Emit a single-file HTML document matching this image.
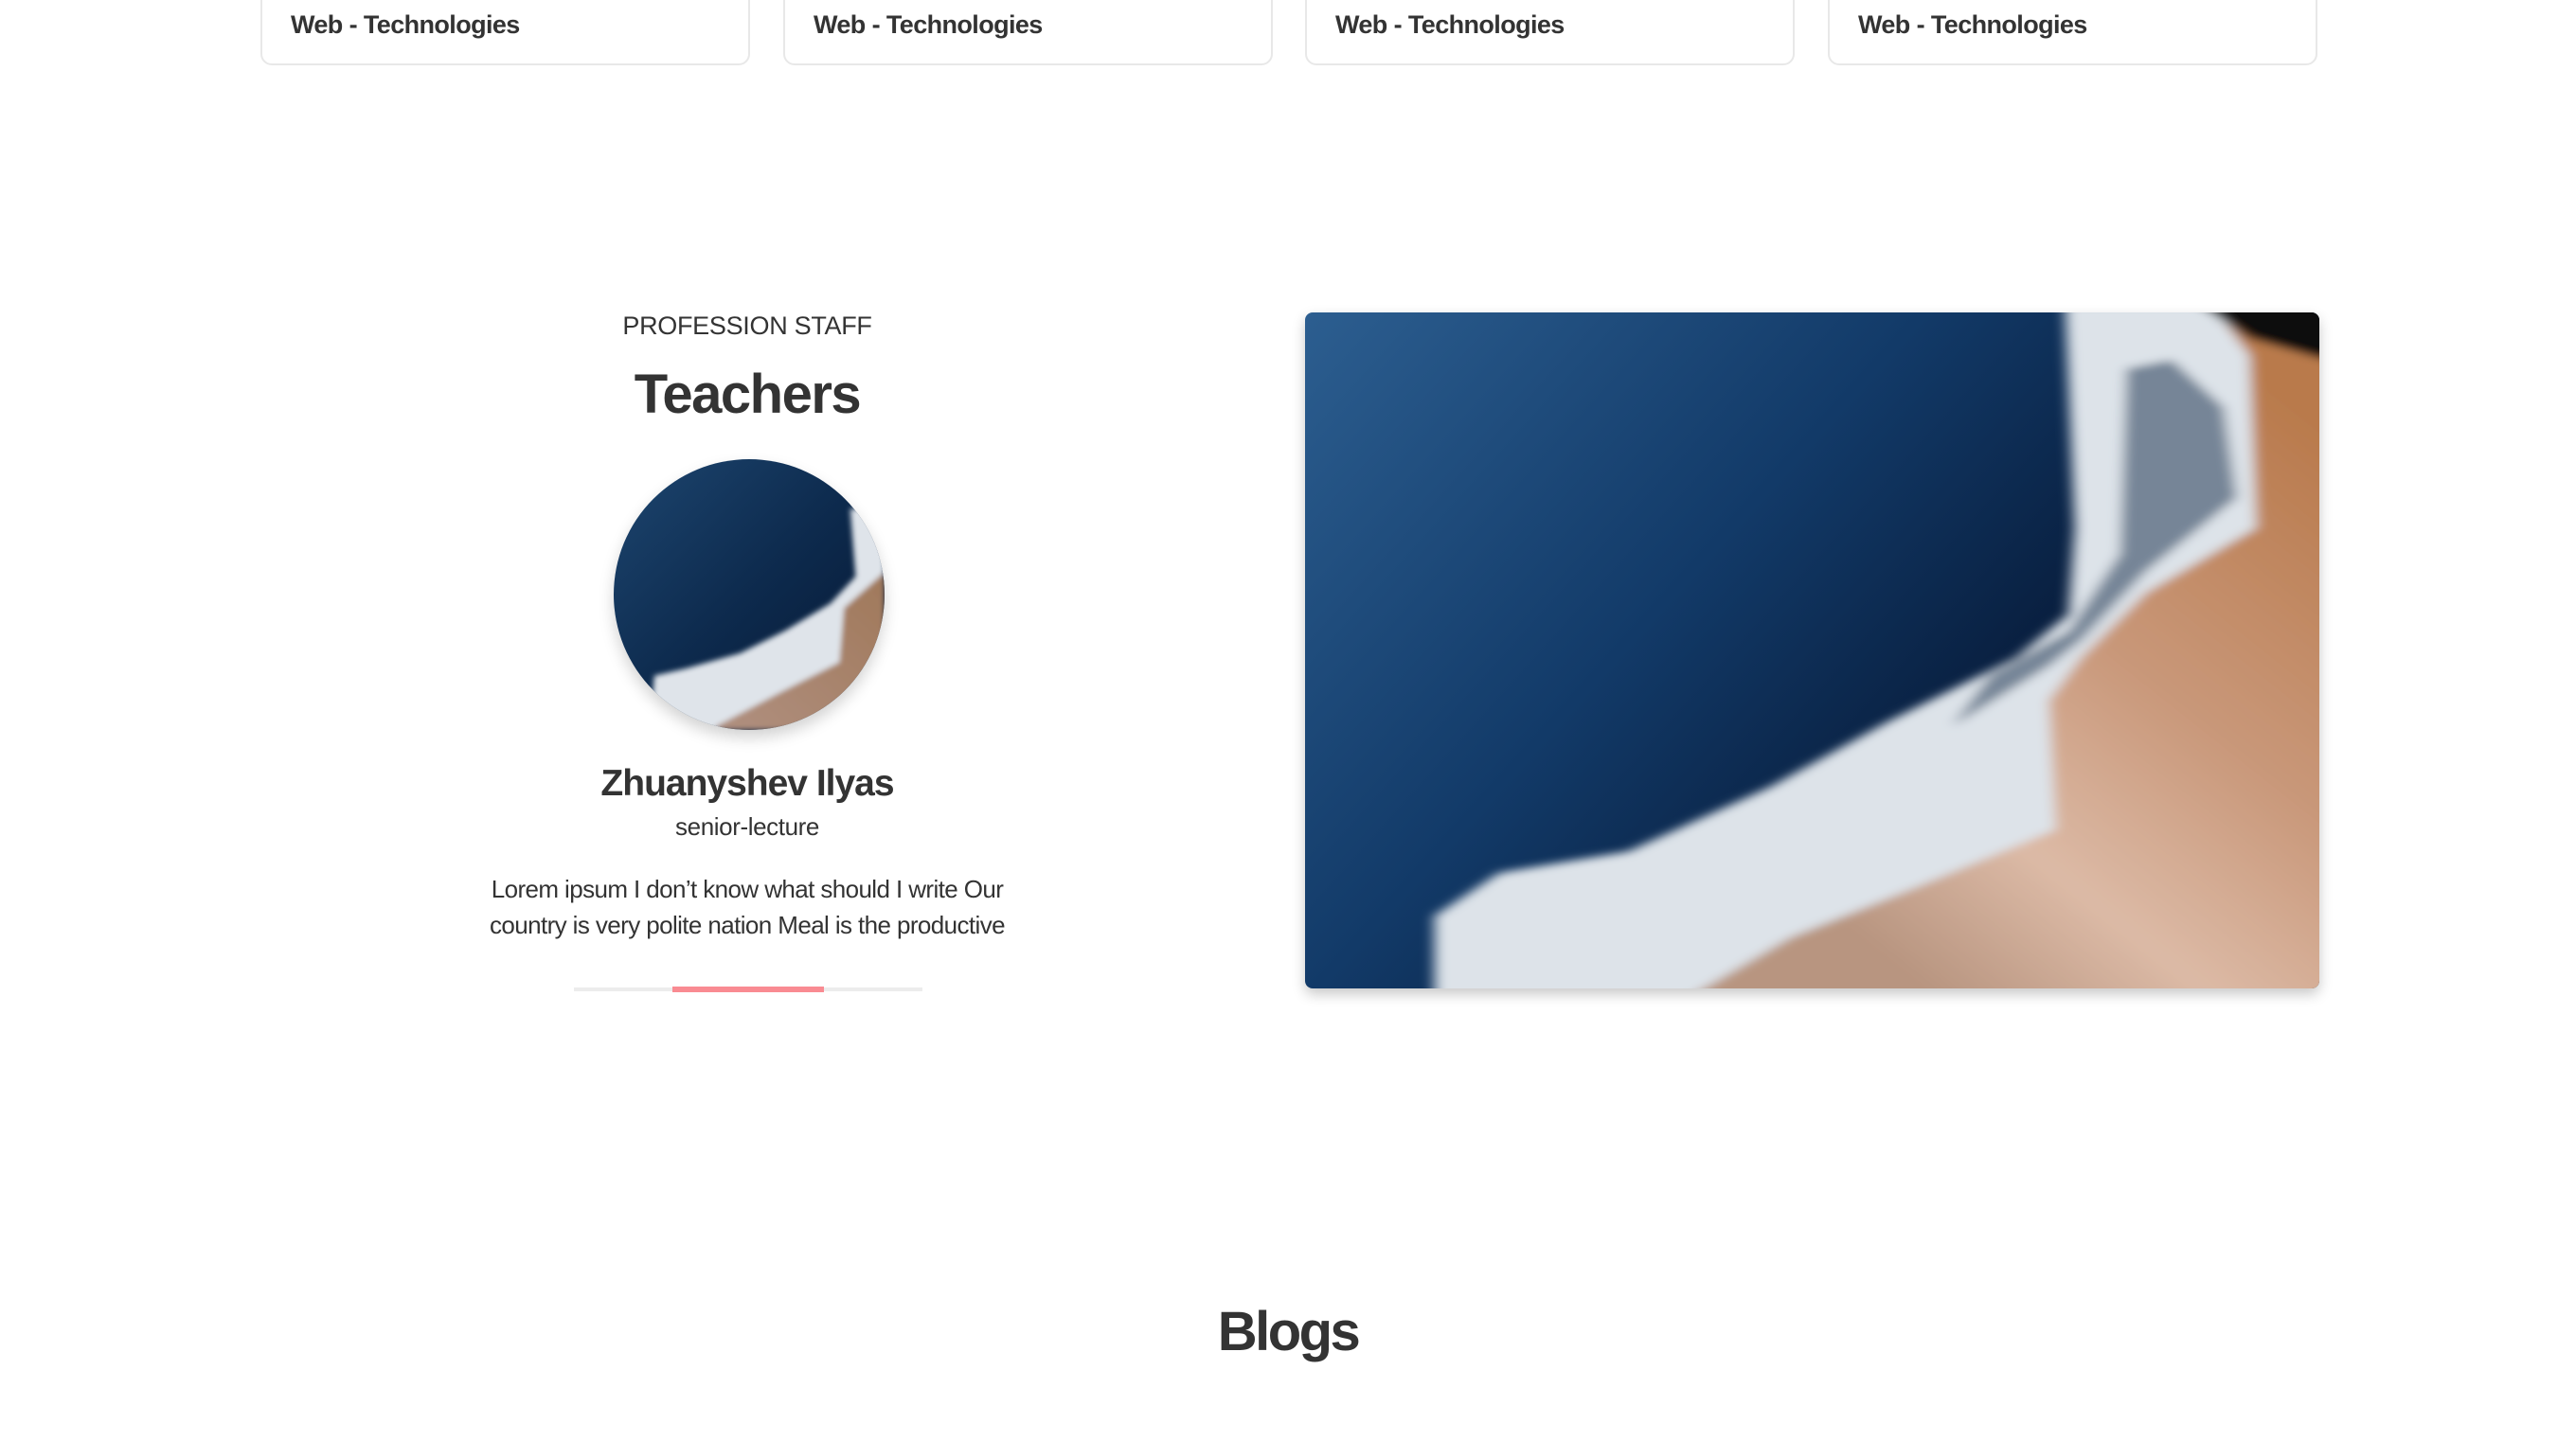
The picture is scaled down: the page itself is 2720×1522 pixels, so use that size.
<!DOCTYPE html>
<html><head><meta charset="utf-8"><style>
html,body{margin:0;padding:0;background:#fff;}
body{width:2720px;height:1522px;position:relative;overflow:hidden;font-family:"Liberation Sans",sans-serif;color:#333;}
.card{position:absolute;top:-20px;height:89px;width:517px;border:2px solid #e8e8e8;border-radius:12px;box-sizing:border-box;background:#fff;}
.card span{position:absolute;left:30px;top:29px;font-weight:bold;font-size:27px;letter-spacing:-0.6px;color:#333;}
.c{position:absolute;left:289px;width:1000px;text-align:center;}
</style></head><body>
<div class="card" style="left:275px"><span>Web - Technologies</span></div>
<div class="card" style="left:827px"><span>Web - Technologies</span></div>
<div class="card" style="left:1378px"><span>Web - Technologies</span></div>
<div class="card" style="left:1930px"><span>Web - Technologies</span></div>

<div class="c" style="top:329px;font-size:27px;letter-spacing:-0.3px;">PROFESSION STAFF</div>
<div class="c" style="top:383px;font-size:58px;font-weight:bold;letter-spacing:-1.5px;">Teachers</div>

<div style="position:absolute;left:648px;top:485px;width:286px;height:286px;border-radius:50%;overflow:hidden;box-shadow:0 8px 16px rgba(0,0,0,0.18);">
<svg width="286" height="286" viewBox="0 0 300 300" preserveAspectRatio="none">
<defs>
<linearGradient id="o2" x1="0" y1="0" x2="1" y2="1"><stop offset="0" stop-color="#1d4670"/><stop offset="0.5" stop-color="#0d2a4d"/><stop offset="1" stop-color="#061630"/></linearGradient>
<linearGradient id="s2" x1="1" y1="0" x2="0" y2="1"><stop offset="0" stop-color="#a0785a"/><stop offset="1" stop-color="#b09080"/></linearGradient>
<filter id="b2"><feGaussianBlur stdDeviation="3"/></filter>
</defs>
<rect width="300" height="300" fill="url(#o2)"/>
<g filter="url(#b2)">
<path d="M262,55 L268,130 L240,160 L190,190 L140,215 L80,232 L45,240 L40,300 L300,300 L300,55 Z" fill="#dfe4ea"/>
<path d="M300,125 L255,165 L250,225 L185,258 L115,295 L110,300 L300,300 Z" fill="url(#s2)"/>
</g>
</svg></div>

<div class="c" style="top:806px;font-size:39px;font-weight:bold;letter-spacing:-1px;">Zhuanyshev Ilyas</div>
<div class="c" style="top:858px;font-size:26px;letter-spacing:-0.4px;">senior-lecture</div>
<div class="c" style="top:920px;font-size:26px;line-height:38px;letter-spacing:-0.6px;">Lorem ipsum I don’t know what should I write Our<br>country is very polite nation Meal is the productive</div>

<div style="position:absolute;left:606px;top:1043px;width:368px;height:4px;background:#ececec;"></div>
<div style="position:absolute;left:710px;top:1042px;width:160px;height:6px;background:#f98b92;"></div>

<div style="position:absolute;left:1378px;top:330px;width:1071px;height:714px;border-radius:8px;overflow:hidden;box-shadow:0 6px 14px rgba(0,0,0,0.22);">
<svg width="1071" height="714" viewBox="0 0 1568 1568" preserveAspectRatio="none">
<defs>
<linearGradient id="o1" x1="0" y1="0" x2="1" y2="0.6"><stop offset="0" stop-color="#2c5e90"/><stop offset="0.45" stop-color="#123a68"/><stop offset="0.8" stop-color="#071a38"/><stop offset="1" stop-color="#030b1c"/></linearGradient>
<linearGradient id="s1" x1="1" y1="0.2" x2="0.4" y2="1"><stop offset="0" stop-color="#b97a4c"/><stop offset="0.45" stop-color="#c9987a"/><stop offset="0.75" stop-color="#dcbaa6"/><stop offset="1" stop-color="#b89580"/></linearGradient>
<filter id="b1"><feGaussianBlur stdDeviation="10"/></filter>
</defs>
<rect width="1568" height="1568" fill="url(#o1)"/>
<g filter="url(#b1)">
<path d="M1175,-20 L1190,500 L1180,700 L1100,800 L900,950 L720,1100 L500,1250 L300,1300 L200,1400 L200,1600 L1600,1600 L1600,-20 Z" fill="#dde3e9"/>
<path d="M1270,130 L1340,110 L1420,220 L1440,430 L1300,600 L1200,760 L1150,820 L1000,960 L1060,840 L1180,740 L1260,560 Z" fill="#4a5c74" opacity="0.7"/>
<path d="M1400,-20 L1460,100 L1470,500 L1300,650 L1200,800 L1150,900 L1160,1200 L950,1330 L750,1450 L580,1600 L1600,1600 L1600,-20 Z" fill="url(#s1)"/>
<path d="M1380,-20 L1600,-20 L1600,120 L1460,60 Z" fill="#080808"/>
</g>
</svg></div>

<div style="position:absolute;left:0;width:2720px;top:1373px;text-align:center;font-size:58px;font-weight:bold;letter-spacing:-2.5px;">Blogs</div>
</body></html>
